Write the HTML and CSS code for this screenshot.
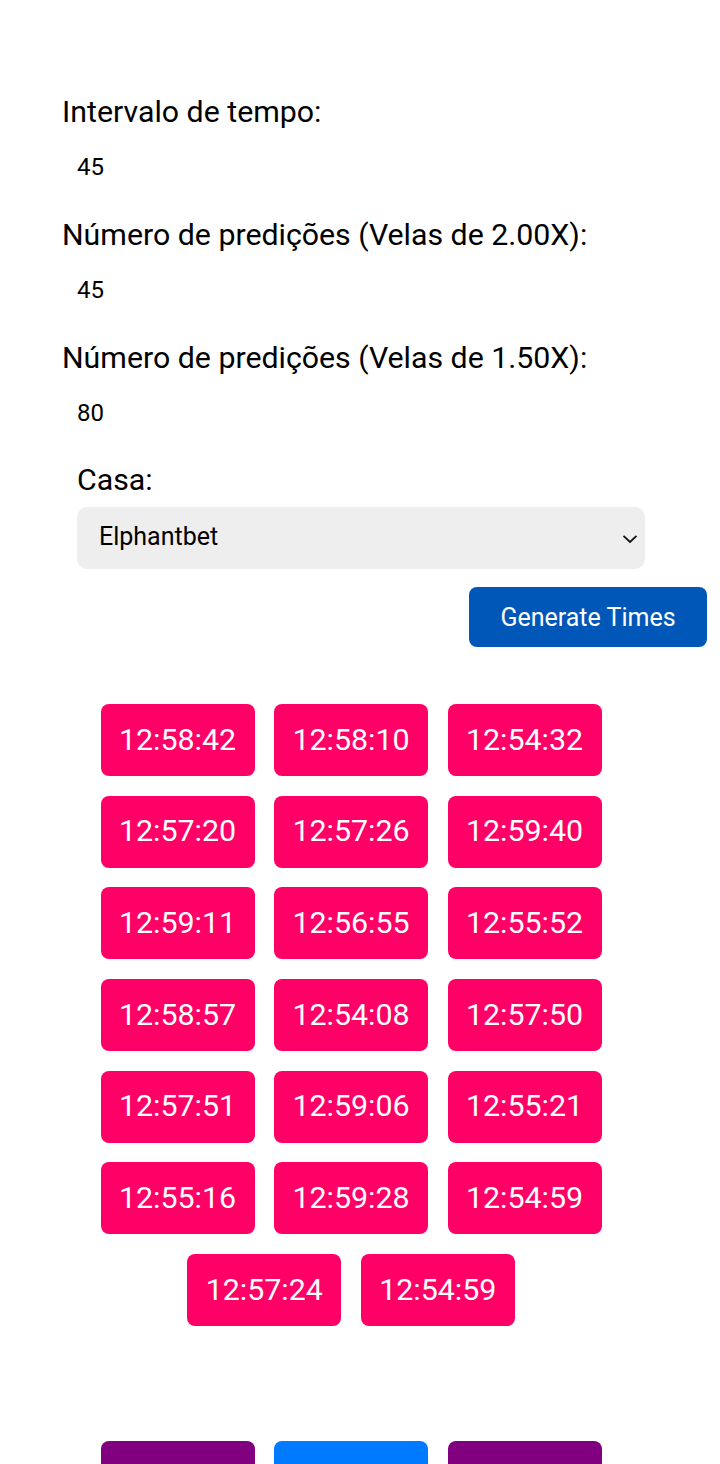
FILE: index.html
```html
<!DOCTYPE html>
<html lang="pt">
<head>
<meta charset="utf-8">
<title>Gerador de tempos</title>
<link rel="stylesheet" href="styles.css">
</head>
<body>
<main class="page">
  <form class="form">
    <div class="field">
      <label class="label">Intervalo de tempo:</label>
      <div class="value">45</div>
    </div>
    <div class="field">
      <label class="label">Número de predições (Velas de 2.00X):</label>
      <div class="value">45</div>
    </div>
    <div class="field">
      <label class="label">Número de predições (Velas de 1.50X):</label>
      <div class="value">80</div>
    </div>
    <div class="casa">
      <label class="label">Casa:</label>
      <div class="select-wrap">
        <div class="select">Elphantbet</div>
        <svg class="chevron" width="16" height="10" viewBox="0 0 16 10"><path d="M1.5 1.8 L8 8 L14.5 1.8" fill="none" stroke="#111" stroke-width="1.8"/></svg>
      </div>
    </div>
    <div class="actions">
      <button type="button" class="generate">Generate Times</button>
    </div>
  </form>

  <section class="times">
    <div class="time">12:58:42</div>
    <div class="time">12:58:10</div>
    <div class="time">12:54:32</div>
    <div class="time">12:57:20</div>
    <div class="time">12:57:26</div>
    <div class="time">12:59:40</div>
    <div class="time">12:59:11</div>
    <div class="time">12:56:55</div>
    <div class="time">12:55:52</div>
    <div class="time">12:58:57</div>
    <div class="time">12:54:08</div>
    <div class="time">12:57:50</div>
    <div class="time">12:57:51</div>
    <div class="time">12:59:06</div>
    <div class="time">12:55:21</div>
    <div class="time">12:55:16</div>
    <div class="time">12:59:28</div>
    <div class="time">12:54:59</div>
    <div class="time">12:57:24</div>
    <div class="time">12:54:59</div>
  </section>

  <nav class="bottom">
    <div class="nav-btn purple"></div>
    <div class="nav-btn blue"></div>
    <div class="nav-btn purple"></div>
  </nav>
</main>
</body>
</html>
```

FILE: styles.css
```css
* { box-sizing: border-box; }
html, body { margin: 0; padding: 0; background: #fff; }
body {
  font-family: Roboto, "Liberation Sans", sans-serif;
  color: #000;
  width: 720px;
  height: 1464px;
  overflow: hidden;
}
.page {
  padding-top: 95px;
}
.form {
  padding-left: 62px;
}
.field {
  margin-bottom: 34px;
}
.label {
  display: block;
  font-size: 30.3px;
  line-height: 34px;
}
.value {
  margin-top: 21px;
  padding-left: 15px;
  font-size: 24px;
  line-height: 34px;
}
.casa {
  padding-left: 15px;
  margin-top: -1px;
}
.select-wrap {
  position: relative;
  width: 568px;
  margin-top: 10px;
}
.select {
  height: 62px;
  background: #eeeeee;
  border-radius: 10px;
  padding-left: 22px;
  font-size: 25px;
  line-height: 60px;
}
.chevron {
  position: absolute;
  right: 7px;
  top: 27px;
}
.actions {
  display: flex;
  justify-content: flex-end;
  margin-top: 18px;
  padding-right: 13px;
}
.generate {
  width: 238px;
  height: 60px;
  border: none;
  border-radius: 8px;
  background: #0057b7;
  color: #fff;
  font-family: Roboto, "Liberation Sans", sans-serif;
  font-size: 25px;
  padding: 0;
}
.times {
  margin: 57px 0 0 61px;
  width: 580px;
  display: flex;
  flex-wrap: wrap;
  justify-content: center;
  gap: 19.7px 19.5px;
}
.time {
  width: 154px;
  height: 72px;
  border-radius: 8px;
  background: #ff0066;
  color: #fff;
  font-size: 30.4px;
  display: flex;
  align-items: center;
  justify-content: center;
  padding-bottom: 2px;
}
.bottom {
  margin: 115px 0 0 61px;
  width: 580px;
  display: flex;
  justify-content: center;
  gap: 19.5px;
}
.nav-btn {
  width: 154px;
  height: 72px;
  border-radius: 8px;
}
.purple { background: #800080; }
.blue { background: #007bff; }
```
